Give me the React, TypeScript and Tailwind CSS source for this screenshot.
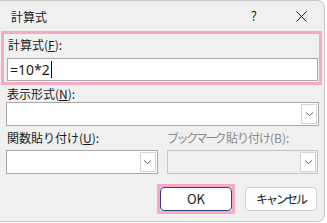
const font = "font-['Yu_Gothic_UI','Noto_Sans_CJK_JP',sans-serif]";

function Chevron() {
  return (
    <svg width="9" height="6" viewBox="0 0 9 6" className="text-[#606060]">
      <path d="M1 1.5 L4.5 4.5 L8 1.5" fill="none" stroke="currentColor" strokeWidth="1" />
    </svg>
  );
}

function Select({ disabled, className }: { disabled?: boolean; className?: string }) {
  return (
    <div
      className={`flex h-[24px] border ${disabled ? "border-[#c6c6c6] bg-[#f0f0f0]" : "border-[#a8a8a8] bg-white"} ${className ?? ""}`}
    >
      <div className="flex-1" />
      <div className="m-[1px] flex w-[16px] items-center justify-center border border-[#d4d4d4] bg-white">
        <Chevron />
      </div>
    </div>
  );
}

export default function App() {
  return (
    <div className={`h-[223px] w-[327px] overflow-hidden bg-white text-[12px] text-[#1b1b1b] ${font}`}>
      <div className="flex h-[222px] w-[325px] flex-col rounded-tr-[8px] rounded-br-[8px] border-t border-r border-b border-[#c9c9c9] bg-[#f0f0f0]">
        {/* title bar */}
        <div className="flex h-[30px] items-center pl-[11px]">
          <span className="flex-1 pt-[1px]">計算式</span>
          <span className="mr-[39px] text-[13px]">?</span>
          <svg width="11" height="11" viewBox="0 0 11 11" className="mr-[17px]">
            <path d="M0.5 0.5 L10.5 10.5 M10.5 0.5 L0.5 10.5" stroke="#1b1b1b" strokeWidth="1" />
          </svg>
        </div>

        {/* formula section */}
        <div className="ml-[1px] flex w-[321px] flex-col border-[3px] border-[#f4a9c4] pl-[3px] pr-[1px]">
          <div className="flex h-[22px] items-center pl-[1px]">
            計算式(<span className="underline">F</span>):
          </div>
          <div className="mt-[2px] mb-[1px] flex h-[23px] items-center border border-[#a8a8a8] bg-white pl-[2px] text-[14px]">
            <span className="font-['Segoe_UI','Noto_Sans',sans-serif]">=10*2</span>
            <span className="ml-[1px] h-[17px] w-[1px] bg-black" />
          </div>
        </div>

        <div className="flex flex-col px-[6px]">
          <div className="flex h-[17px] items-center pl-[1px]">
            表示形式(<span className="underline">N</span>):
          </div>
          <Select className="w-[313px]" />

          <div className="mt-[4px] mb-[4px] flex h-[16px] items-center">
            <div className="w-[161px] pl-[1px]">
              関数貼り付け(<span className="underline">U</span>):
            </div>
            <div className="text-[#8b8b8b]">
              <span className="tracking-[-2.5px]">ブックマーク</span>
              <span className="ml-[2px] tracking-[-1px]">貼り付け</span>(B):
            </div>
          </div>
          <div className="flex">
            <Select className="w-[152px]" />
            <Select disabled className="ml-[9px] w-[152px]" />
          </div>

          <div className="mt-[10px] flex">
            <div className="ml-[151px] border-[3px] border-[#f4a9c4]">
              <div className="flex h-[24px] w-[72px] items-center justify-center rounded-[4px] border border-[#27418f] bg-white text-[13px]">
                OK
              </div>
            </div>
            <div className="mt-[3px] ml-[10px] flex h-[24px] w-[72px] items-center justify-center rounded-[4px] border border-[#d0d0d0] bg-[#fdfdfd] tracking-[-2px]">
              キャンセル
            </div>
          </div>
        </div>
      </div>
    </div>
  );
}
